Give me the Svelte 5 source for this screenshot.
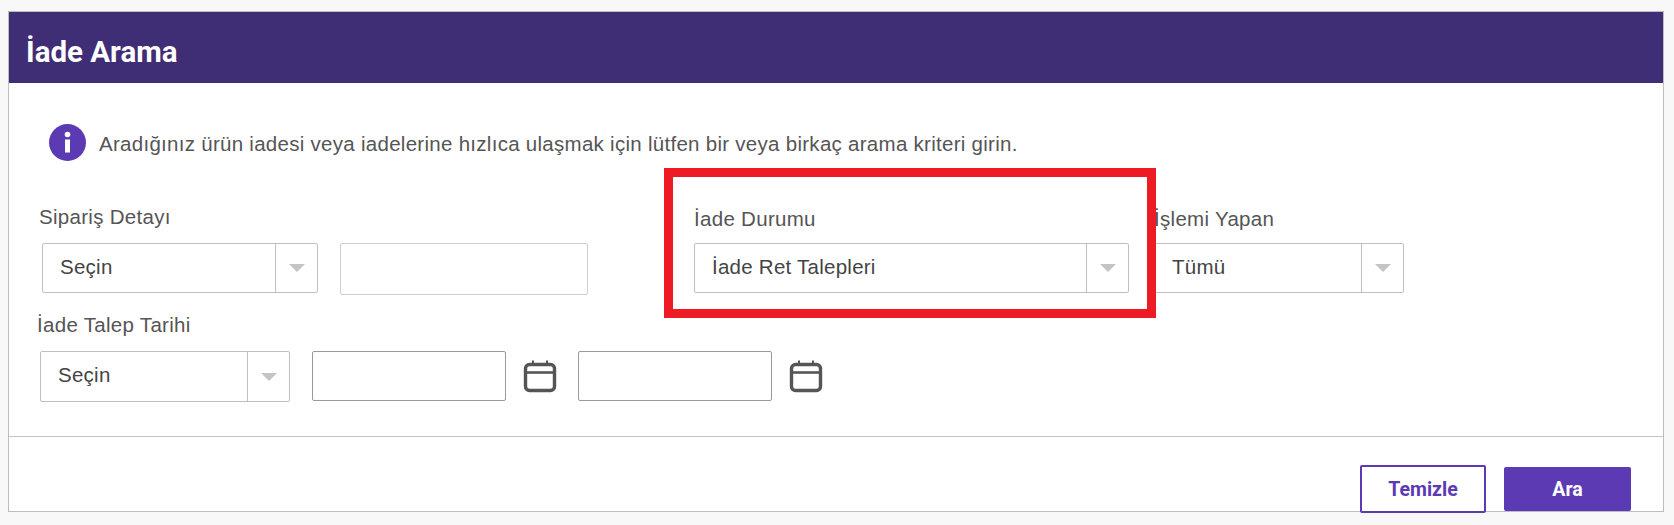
<script lang="ts">
  const rowOne = [
    { label: 'İade Durumu', value: 'İade Ret Talepleri', cls: 'status' },
    { label: 'İşlemi Yapan', value: 'Tümü', cls: 'actor' }
  ];
</script>

{#snippet select(value: string, cls: string)}
  <div class="select {cls}">
    <span class="select__value">{value}</span>
    <span class="select__toggle"><span class="select__arrow"></span></span>
  </div>
{/snippet}

{#snippet calendar()}
  <svg class="cal" viewBox="0 0 34 34" fill="none" stroke="#555" stroke-width="3.4" aria-hidden="true">
    <rect x="2.5" y="5.5" width="29" height="26" rx="4" />
    <path d="M2.5 13.5h29" stroke-width="2.6" />
    <path d="M10 1.5v4M24 1.5v4" stroke-width="2" />
  </svg>
{/snippet}

<div class="page">
  <section class="panel">
    <header class="panel__head">İade Arama</header>

    <div class="panel__body">
      <div class="notice">
        <svg class="notice__icon" viewBox="0 0 37 37" aria-hidden="true">
          <circle cx="18.5" cy="18.5" r="18.5" fill="#5b3ab4" />
          <rect x="16" y="15.5" width="5" height="13" fill="#fff" />
          <circle cx="18.5" cy="10.5" r="2.8" fill="#fff" />
        </svg>
        <p>Aradığınız ürün iadesi veya iadelerine hızlıca ulaşmak için lütfen bir veya birkaç arama kriteri girin.</p>
      </div>

      <div class="row">
        <div class="field detail">
          <span class="label">Sipariş Detayı</span>
          <div class="controls">
            {@render select('Seçin', 'detail-select')}
            <div class="input detail-input"></div>
          </div>
        </div>
        {#each rowOne as f}
          <div class="field {f.cls}">
            <span class="label">{f.label}</span>
            {@render select(f.value, f.cls + '-select')}
          </div>
        {/each}
      </div>

      <div class="field dates">
        <span class="label">İade Talep Tarihi</span>
        <div class="controls">
          {@render select('Seçin', 'date-select')}
          <div class="input date-input"></div>
          {@render calendar()}
          <div class="input date-input"></div>
          {@render calendar()}
        </div>
      </div>
    </div>

    <footer class="panel__foot">
      <button class="btn btn--ghost">Temizle</button>
      <button class="btn btn--solid">Ara</button>
    </footer>
  </section>

  <div class="highlight"></div>
</div>

<style>
  :global(body) {
    background: #f8f8f8;
  }

  .page {
    position: relative;
    width: 1674px;
    height: 525px;
    padding: 11px 10px 0 8px;
    box-sizing: border-box;
    font-family: "Liberation Sans", Arial, sans-serif;
    overflow: hidden;
  }

  .panel {
    height: 501px;
    box-sizing: border-box;
    background: #fff;
    border: 1px solid #bdbdbd;
    display: flex;
    flex-direction: column;
  }

  .panel__head {
    height: 71px;
    flex-shrink: 0;
    box-sizing: border-box;
    background: #3f2d76;
    color: #fff;
    font: bold 29.5px "Roboto", sans-serif;
    line-height: 71px;
    padding: 5px 0 0 17px;
  }

  .panel__body {
    height: 354px;
    flex-shrink: 0;
    box-sizing: border-box;
    border-bottom: 1px solid #c4c4c4;
  }

  .notice {
    display: flex;
    align-items: center;
    gap: 13px;
    padding: 41px 0 0 40px;
  }

  .notice__icon {
    width: 37px;
    height: 37px;
    flex-shrink: 0;
  }

  .notice p {
    margin: 3px 0 0;
    font-size: 20.5px;
    letter-spacing: 0.28px;
    color: #555;
  }

  .row {
    display: flex;
    align-items: flex-start;
    margin-top: 46px;
  }

  .field {
    display: flex;
    flex-direction: column;
  }

  .label {
    font-size: 20.5px;
    letter-spacing: 0.3px;
    color: #555;
    line-height: 20px;
  }

  .controls {
    display: flex;
    align-items: flex-start;
  }

  .detail {
    width: 654px;
    padding-left: 30px;
    box-sizing: border-box;
  }

  .detail .controls {
    margin: 16px 0 0 3px;
    gap: 22px;
  }

  .status {
    width: 491px;
    padding-left: 31px;
    box-sizing: border-box;
    margin-top: 2px;
  }

  .actor {
    margin-top: 2px;
  }

  .status .label,
  .actor .label {
    margin-bottom: 14px;
  }

  .dates {
    margin: 20px 0 0 28px;
  }

  .dates .controls {
    margin: 16px 0 0 3px;
  }

  .select {
    display: flex;
    box-sizing: border-box;
    height: 50px;
    border: 1px solid #bfbfbf;
    border-radius: 2px;
    background: #fff;
  }

  .detail-select { width: 276px; }
  .status-select { width: 435px; }
  .actor-select { width: 250px; }
  .date-select { width: 250px; height: 51px; margin-right: 22px; }

  .select__value {
    flex: 1;
    padding-left: 17px;
    font-size: 20.5px;
    letter-spacing: 0.25px;
    line-height: 46px;
    color: #444;
  }

  .select__toggle {
    width: 41px;
    border-left: 1px solid #bfbfbf;
    display: flex;
    align-items: center;
    justify-content: center;
  }

  .select__arrow {
    width: 0;
    height: 0;
    border-left: 8px solid transparent;
    border-right: 8px solid transparent;
    border-top: 8px solid #c4c4c4;
  }

  .input {
    box-sizing: border-box;
    border-radius: 2px;
    background: #fff;
  }

  .detail-input {
    width: 248px;
    height: 52px;
    border: 1px solid #cfcfcf;
  }

  .date-input {
    width: 194px;
    height: 50px;
    border: 1px solid #9a9a9a;
  }

  .cal {
    width: 34px;
    height: 34px;
    margin: 8px 21px 0 17px;
    flex-shrink: 0;
  }

  .panel__foot {
    display: flex;
    justify-content: flex-end;
    align-items: flex-start;
    gap: 18px;
    padding: 28px 32px 0 0;
  }

  .btn {
    font: bold 19.5px "Roboto", sans-serif;
    border-radius: 2px;
    box-sizing: border-box;
    flex-shrink: 0;
  }

  .btn--ghost {
    width: 126px;
    height: 48px;
    background: #fff;
    border: 2px solid #5b3ab4;
    color: #5b3ab4;
  }

  .btn--solid {
    width: 127px;
    height: 44px;
    margin-top: 2px;
    background: #5b3ab4;
    border: 0;
    color: #fff;
  }

  .highlight {
    position: absolute;
    left: 664px;
    top: 168px;
    width: 492px;
    height: 150px;
    box-sizing: border-box;
    border: 9px solid #ed1c24;
    pointer-events: none;
  }
</style>
